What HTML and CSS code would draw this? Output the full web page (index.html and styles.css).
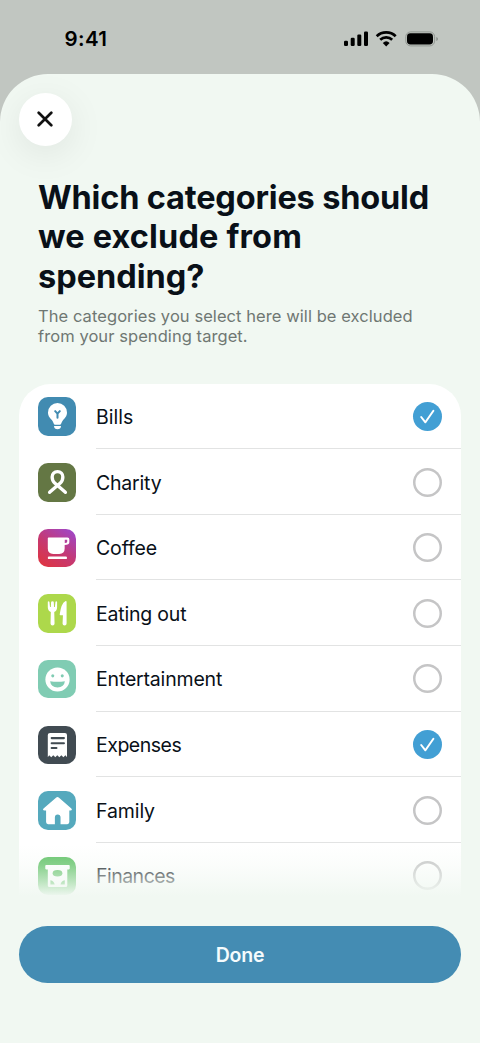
FILE: index.html
```html
<!DOCTYPE html>
<html lang="en">
<head>
<meta charset="utf-8">
<title>Exclude categories</title>
<link rel="stylesheet" href="styles.css">
</head>
<body>
<div class="status">
  <span class="time">9:41</span>
  <svg class="indicators" width="96" height="18" viewBox="0 0 96 18">
    <rect x="1" y="10.7" width="4" height="5.3" rx="1.2"/>
    <rect x="7.7" y="7.7" width="4" height="8.3" rx="1.2"/>
    <rect x="14.3" y="4.6" width="4" height="11.4" rx="1.2"/>
    <rect x="21" y="1.4" width="4" height="14.6" rx="1.2"/>
    <g fill="none" stroke="#000" stroke-width="2.7">
      <path d="M33.7 6.2a13.7 13.7 0 0 1 19 0"/>
      <path d="M37.2 9.8a8.7 8.7 0 0 1 12 0"/>
    </g>
    <path d="M43.2 16.4l-3.4-3.5a5 5 0 0 1 6.8 0z"/>
    <rect x="62.8" y="1.9" width="28.8" height="14" rx="4.8" fill="none" stroke="#929792"/>
    <rect x="64" y="3.3" width="26" height="11.2" rx="3.4"/>
    <path d="M93.4 6.9c2 .7 2 3.3 0 4z" fill="#868b87"/>
  </svg>
</div>
<main class="sheet">
  <button class="close" aria-label="Close">
    <svg width="16" height="16" viewBox="0 0 16 16"><path d="M1.7 1.7l12.6 12.6M14.3 1.7L1.7 14.3"/></svg>
  </button>
  <header class="intro">
    <h1><span class="h1-a">Which categories should</span><br><span class="h1-b">we exclude from</span><br><span class="h1-c">spending?</span></h1>
    <p>The categories you select here will be excluded<br>from your spending target.</p>
  </header>
  <section class="list">
    <div class="row">
      <svg class="icon bills" viewBox="0 0 38 38"><path d="M19.3 6a9.4 9.4 0 0 0-9.4 9.3c0 3.900 2.300 5.700 4 7.700 1.300 1.500 1.500 4.500 3.200 4.500h4.400c1.700 0 1.900-3 3.200-4.500 1.700-2 4-3.800 4-7.700A9.4 9.4 0 0 0 19.3 6z"/><path d="M15.800 28.700h7q-.3 3.200-3.500 3.200t-3.500-3.200z"/><path class="cut" d="M17 14l2.300 2.500 2.300-2.500M19.3 16.500v4"/></svg>
      <div class="cell"><span class="name">Bills</span><span class="radio on"><svg viewBox="0 0 29 29"><path d="M8.2 15l4.2 5.3 8-11.6"/></svg></span></div>
    </div>
    <div class="row">
      <svg class="icon charity" viewBox="0 0 38 38"><path class="line" d="M11.5 29l10.6-9.2c1.600-1.500 2.500-3.700 2.500-5.900 0-3.100-2.100-5.300-5.300-5.300s-5.300 2.200-5.300 5.300c0 2.200.9 4.400 2.500 5.900l10.600 9.200"/></svg>
      <div class="cell"><span class="name charity-name">Charity</span><span class="radio"></span></div>
    </div>
    <div class="row">
      <svg class="icon coffee" viewBox="0 0 38 38"><path fill-rule="evenodd" d="M10.500 8.400h18.700q1.800 0 1.800 1.800v2.900q0 2.600-4.600 2.800v3.500q0 5.400-5.400 5.400h-5.900q-5.400 0-5.400-5.400V9.200q0-.8.8-.8zM26.500 10.600v3.300q2.400 0 2.400-1.400v-1.900z"/><rect x="9.7" y="27.3" width="19" height="2.5" rx="1.2"/></svg>
      <div class="cell"><span class="name coffee-name">Coffee</span><span class="radio"></span></div>
    </div>
    <div class="row">
      <svg class="icon eating" viewBox="0 0 38 38"><path d="M9.7 7.7q.8-1 1.6 0l.6 5.1h.8l.3-5.1q1.3-1.200 2.600 0l.3 5.100h.8l.6-5.100q.8-1 1.600 0v5.400q0 3.400-2.800 4.600l.3 11.600q0 2-2 2t-2-2l.3-11.600q-3-1.200-3-4.600z"/><path d="M28.300 7.700v21.600q0 2-2 2t-2-2l.4-8.300h-2.500q-.9 0-.7-1Q23 9.300 27 7.200q1.200-.5 1.300.5z"/></svg>
      <div class="cell"><span class="name eating-name">Eating out</span><span class="radio"></span></div>
    </div>
    <div class="row">
      <svg class="icon fun" viewBox="0 0 38 38"><circle cx="19.3" cy="19.3" r="12"/><g fill="#80ccb3"><circle cx="14.6" cy="15.7" r="1.5"/><circle cx="24" cy="15.7" r="1.5"/><path d="M12 21q7.300 1.200 14.600 0-.7 6.100-7.300 6.100T12 21z"/></g></svg>
      <div class="cell"><span class="name fun-name">Entertainment</span><span class="radio"></span></div>
    </div>
    <div class="row">
      <svg class="icon expenses" viewBox="0 0 38 38"><path d="M12 7h14.700q2 0 2 2v22l-1.500-2-2.100 2-2-2-2 2-2-2-2 2-2-2-2 2-2-2-1.400 2V9q0-2 2.300-2z"/><path class="cut" d="M13.500 12h12.200M13.500 17h12.200M13.500 21.700h4.800"/></svg>
      <div class="cell"><span class="name expenses-name">Expenses</span><span class="radio on"><svg viewBox="0 0 29 29"><path d="M8.2 15l4.2 5.3 8-11.6"/></svg></span></div>
    </div>
    <div class="row">
      <svg class="icon family" viewBox="0 0 38 38"><path d="M17.800 6.600q1.500-1.200 3 0L33 17.400q1.400 1.900-1 1.900h-1v11.500q0 2-2 2h-6.700v-6.600q0-3-2.800-3t-2.800 3v6.600H10q-2 0-2-2V19.300H6.500q-2.400 0-1-1.900z"/></svg>
      <div class="cell"><span class="name family-name">Family</span><span class="radio"></span></div>
    </div>
    <div class="row">
      <svg class="icon finances" viewBox="0 0 38 38"><path d="M8 8h22.600q.8 0 .8.8v2.700q0 .8-.8.8H29v15.800q0 1.600-1.600 1.600H11.300q-1.600 0-1.600-1.600V12.300H8q-.8 0-.8-.8V8.800Q7.200 8 8 8z"/><g fill="#5dc163"><ellipse cx="19.3" cy="16.1" rx="4.8" ry="3.2"/><path d="M12.300 23q3.700.7 4.200 4.300h-4.200zM26.500 23q-3.700.7-4.200 4.300h4.200z"/></g></svg>
      <div class="cell"><span class="name finances-name">Finances</span><span class="radio"></span></div>
    </div>
  </section>
  <button class="done">Done</button>
</main>
</body>
</html>
```
FILE: styles.css
```css
* { box-sizing: border-box; }
body { margin: 0; height: 1043px; overflow: hidden; background: #c1c6c1; color: #091018; font-family: Inter, "Liberation Sans", sans-serif; }
button { border: 0; padding: 0; font-family: inherit; }
.status { height: 74px; padding: 0 41px 0 64.5px; display: flex; justify-content: space-between; align-items: flex-start; }
.time { margin-top: 26px; font-size: 20.5px; line-height: 26px; font-weight: 600; letter-spacing: .4px; color: #000; }
.indicators { margin-top: 30px; display: block; }
.sheet { height: 969px; border-radius: 48px 48px 0 0; background: #f1f8f2; padding: 19px 19px 0; display: flex; flex-direction: column; overflow: hidden; }
.close { width: 53px; height: 53px; flex: none; border-radius: 50%; background: #fff; box-shadow: 0 8px 36px rgba(0, 0, 0, .08); display: flex; align-items: center; justify-content: center; }
.close svg { display: block; margin: 0 1px 1px 0; }
.close path { fill: none; stroke: #111; stroke-width: 2.7; stroke-linecap: round; }
.intro { height: 238px; padding: 31.5px 19px 0; flex: none; white-space: nowrap; }
h1 { margin: 0; font-size: 32.5px; line-height: 39.7px; font-weight: 700; }
.h1-a { letter-spacing: -.17px; }
.h1-b { letter-spacing: .14px; }
.intro p { margin: 9px 0 0; font-size: 16.5px; line-height: 20px; letter-spacing: .07px; color: #6f7772; }
.list { position: relative; height: 517px; flex: none; overflow: hidden; border-radius: 32px 32px 0 0; background: #fff; }
.list::after { content: ""; position: absolute; inset: auto 0 0; height: 56px; background: linear-gradient(rgba(241, 248, 242, 0), rgba(241, 248, 242, .28) 35%, rgba(241, 248, 242, .65) 66%, #f1f8f2 92%); }
.row { height: 65.65px; padding-left: 19px; display: flex; align-items: center; gap: 20px; }
.row:first-child { height: 65px; }
.icon { width: 38.4px; height: 38.4px; margin-right: -.4px; flex: none; border-radius: 10px; fill: #fff; }
.row:not(:first-child) .icon { margin-top: 1px; }
.icon .cut, .icon .line { fill: none; stroke-width: 2; stroke-linecap: round; stroke-linejoin: round; }
.icon .line { stroke: #fff; stroke-width: 3.3; }
.bills { background: #418bb1; }
.bills .cut { stroke: #418bb1; }
.charity { background: #647744; }
.coffee { background: linear-gradient(35deg, #df3440 5%, #c53973 48%, #9c48ce 98%); }
.eating { background: #add84b; }
.fun { background: #80ccb3; }
.expenses { background: #414b52; }
.expenses .cut { stroke: #414b52; }
.family { background: #55a9bd; }
.finances { background: #5dc163; }
.cell { flex: 1; height: 100%; padding-right: 19px; border-bottom: 1px solid #e2e3e3; display: flex; align-items: center; justify-content: space-between; }
.row:not(:first-child) .cell { padding-top: 1.4px; }
.name { padding-top: 1px; font-size: 19.5px; line-height: 26px; }
.charity-name { letter-spacing: -.2px; }
.coffee-name { letter-spacing: -.15px; }
.eating-name { letter-spacing: -.2px; }
.fun-name { letter-spacing: -.18px; }
.expenses-name { letter-spacing: -.48px; }
.family-name { letter-spacing: -.1px; }
.finances-name { letter-spacing: -.52px; }
.radio { width: 29px; height: 29px; flex: none; box-shadow: inset 0 0 0 2.5px #c5c5c6; border-radius: 50%; }
.radio.on { box-shadow: none; background: #429fd4; }
.radio svg { display: block; fill: none; stroke: #fff; stroke-width: 2; stroke-linecap: round; stroke-linejoin: round; }
.done { height: 57px; flex: none; margin-top: 25px; border-radius: 29px; background: #448cb3; color: #f5fbfd; font-size: 19.5px; font-weight: 600; letter-spacing: -.25px; }
```
